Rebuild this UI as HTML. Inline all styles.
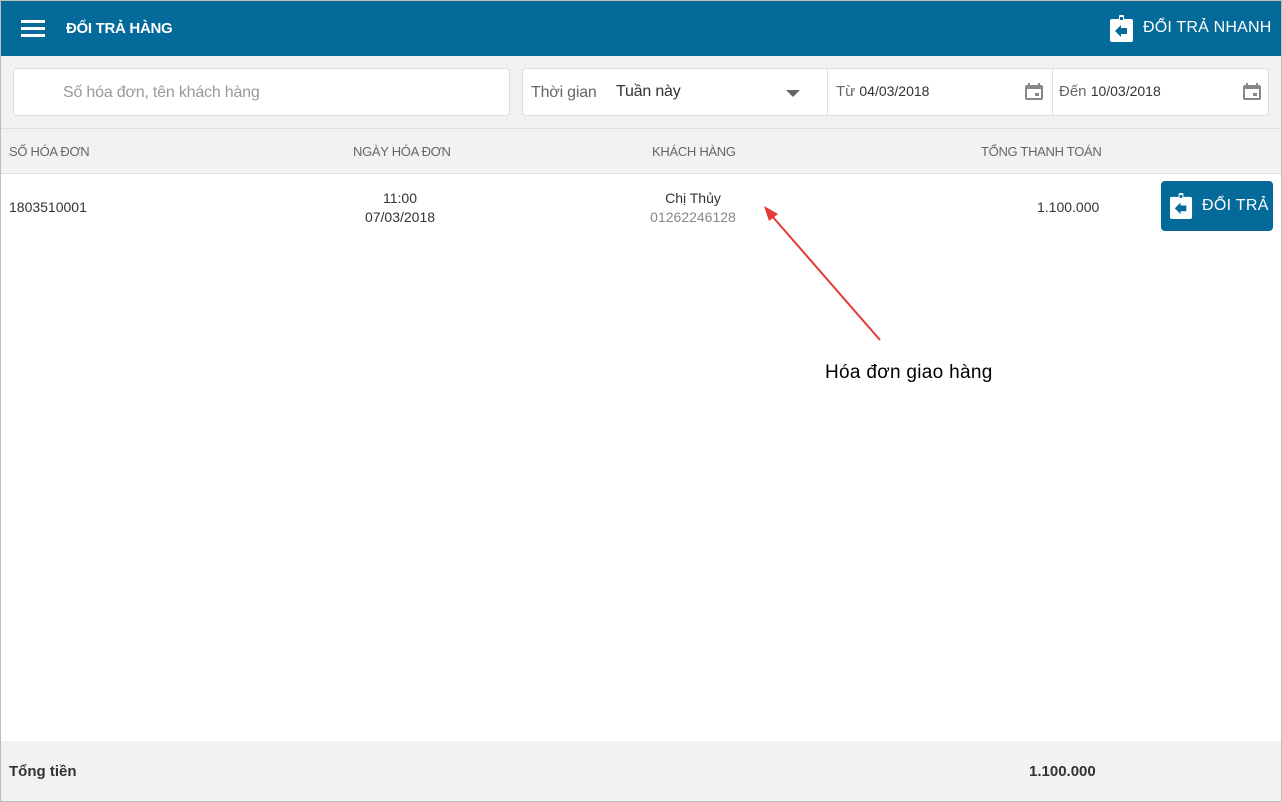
<!DOCTYPE html>
<html><head><meta charset="utf-8"><style>
body{margin:0;width:1282px;height:802px;overflow:hidden;font-family:"Liberation Sans",sans-serif;background:#fff;position:relative}
.frame{position:absolute;left:0;top:0;width:1280px;height:800px;border:1px solid #bdbdbd}
.hdr{position:absolute;left:1px;top:1px;width:1280px;height:55px;background:#046a99;color:#fff}
.ab{position:absolute}
.filter{position:absolute;left:1px;top:56px;width:1280px;height:72px;background:#f2f2f2}
.box{position:absolute;background:#fff;border:1px solid #dedede;border-radius:4px;box-sizing:border-box}
.th{position:absolute;left:1px;top:128px;width:1280px;height:44px;background:#f2f2f2;border-top:1px solid #e0e0e0;border-bottom:1px solid #e0e0e0;font-size:13px;color:#666;letter-spacing:-0.3px}
.foot{position:absolute;left:1px;top:741px;width:1280px;height:60px;background:#f2f2f2;font-size:15px;font-weight:bold;color:#333}
.cal{position:absolute;width:18px;height:17px}
</style></head><body>
<div class="frame"></div>
<div class="hdr">
 <div class="ab" style="left:20px;top:19px;width:24px;height:3px;background:#fff"></div>
 <div class="ab" style="left:20px;top:26px;width:24px;height:3px;background:#fff"></div>
 <div class="ab" style="left:20px;top:33px;width:24px;height:3px;background:#fff"></div>
 <div class="ab" style="left:65px;top:19px;font-size:15px;font-weight:bold;letter-spacing:-0.3px">ĐỔI TRẢ HÀNG</div>
 <svg class="ab" style="left:1109px;top:14px" width="24" height="27" viewBox="0 0 24 27"><rect x="0" y="4" width="23" height="23" rx="2" fill="#fff"/><rect x="9" y="0" width="5" height="6" rx="1" fill="#fff"/><rect x="10" y="2" width="3" height="3" fill="#046a99"/><path d="M5 16 L11 10 V13 H17 V19 H11 V22 Z" fill="#046a99"/></svg>
 <div class="ab" style="left:1142px;top:18px;font-size:16px;letter-spacing:0.2px">ĐỔI TRẢ NHANH</div>
</div>
<div class="filter">
 <div class="box" style="left:12px;top:12px;width:497px;height:48px"><div class="ab" style="left:49px;top:15px;font-size:16px;color:#999;letter-spacing:-0.2px">Số hóa đơn, tên khách hàng</div></div>
 <div class="box" style="left:521px;top:12px;width:747px;height:48px">
  <div class="ab" style="left:8px;top:15px;font-size:16px;color:#666;letter-spacing:-0.2px">Thời gian</div>
  <div class="ab" style="left:93px;top:14px;font-size:16px;color:#333;letter-spacing:-0.2px">Tuần này</div>
  <div class="ab" style="left:263px;top:21px;width:0;height:0;border-left:7px solid transparent;border-right:7px solid transparent;border-top:7px solid #666"></div>
  <div class="ab" style="left:304px;top:0;width:1px;height:46px;background:#dedede"></div>
  <div class="ab" style="left:313px;top:14px;font-size:15px;color:#666">Từ <span style="color:#333;font-size:14px">04/03/2018</span></div>
  <svg class="cal" style="left:502px;top:14px" viewBox="0 0 18 17"><rect x="0" y="2" width="18" height="15" rx="2" fill="#888"/><rect x="2" y="6" width="14" height="9" fill="#fff"/><rect x="10" y="10" width="4" height="3" fill="#888"/><rect x="3" y="0" width="2" height="4" fill="#888"/><rect x="13" y="0" width="2" height="4" fill="#888"/></svg>
  <div class="ab" style="left:529px;top:0;width:1px;height:46px;background:#dedede"></div>
  <div class="ab" style="left:536px;top:14px;font-size:15px;color:#666">Đến <span style="color:#333;font-size:14px">10/03/2018</span></div>
  <svg class="cal" style="left:720px;top:14px" viewBox="0 0 18 17"><rect x="0" y="2" width="18" height="15" rx="2" fill="#888"/><rect x="2" y="6" width="14" height="9" fill="#fff"/><rect x="10" y="10" width="4" height="3" fill="#888"/><rect x="3" y="0" width="2" height="4" fill="#888"/><rect x="13" y="0" width="2" height="4" fill="#888"/></svg>
 </div>
</div>
<div class="th">
 <div class="ab" style="left:8px;top:15px">SỐ HÓA ĐƠN</div>
 <div class="ab" style="left:352px;top:15px">NGÀY HÓA ĐƠN</div>
 <div class="ab" style="left:651px;top:15px">KHÁCH HÀNG</div>
 <div class="ab" style="left:980px;top:15px">TỔNG THANH TOÁN</div>
</div>
<div class="ab" style="left:9px;top:199px;font-size:14px;color:#333">1803510001</div>
<div class="ab" style="left:300px;width:200px;top:189px;font-size:14px;color:#333;text-align:center;line-height:19px">11:00<br>07/03/2018</div>
<div class="ab" style="left:593px;width:200px;top:189px;font-size:14px;color:#333;text-align:center;line-height:19px">Chị Thủy<br><span style="color:#888">01262246128</span></div>
<div class="ab" style="left:1037px;top:199px;font-size:14px;color:#333">1.100.000</div>
<div class="ab" style="left:1161px;top:181px;width:112px;height:50px;background:#046a99;border-radius:4px;color:#fff">
 <svg class="ab" style="left:9px;top:12px" width="23" height="26" viewBox="0 0 24 27"><rect x="0" y="4" width="23" height="23" rx="2" fill="#fff"/><rect x="9" y="0" width="5" height="6" rx="1" fill="#fff"/><rect x="10" y="2" width="3" height="3" fill="#046a99"/><path d="M5 16 L11 10 V13 H17 V19 H11 V22 Z" fill="#046a99"/></svg>
 <div class="ab" style="left:41px;top:16px;font-size:16px;letter-spacing:0.3px">ĐỔI TRẢ</div>
</div>
<svg class="ab" style="left:0;top:0" width="1282" height="802"><line x1="880" y1="340" x2="772" y2="216" stroke="#e53935" stroke-width="2"/><path d="M764 206 L778 214 L769 221 Z" fill="#e53935"/></svg>
<div class="ab" style="left:825px;top:362px;font-size:19px;color:#000;letter-spacing:0.3px">Hóa đơn giao hàng</div>
<div class="foot"><div class="ab" style="left:8px;top:22px">Tổng tiền</div><div class="ab" style="left:1028px;top:22px">1.100.000</div></div>
</body></html>
